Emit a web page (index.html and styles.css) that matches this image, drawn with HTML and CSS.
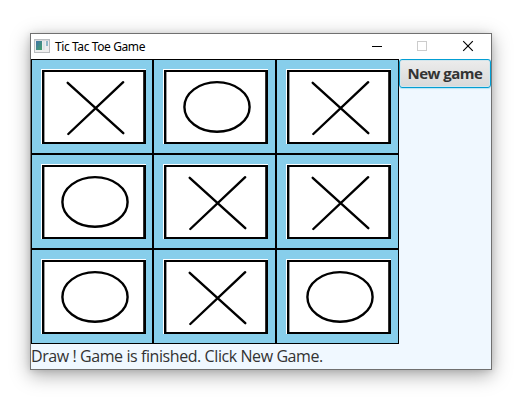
FILE: index.html
```html
<!DOCTYPE html>
<html lang="en">
<head>
<meta charset="utf-8">
<title>Tic Tac Toe Game</title>
<link rel="stylesheet" href="styles.css">
</head>
<body>
<svg class="defs" width="0" height="0" aria-hidden="true">
  <defs>
    <linearGradient id="pane" x1="0" y1="0" x2="1" y2="1">
      <stop offset="0" stop-color="#3f72a8"/><stop offset="1" stop-color="#43a06a"/>
    </linearGradient>
    <symbol id="frame" viewBox="0 0 105 75">
      <rect width="105" height="75" fill="#fff"/>
      <path d="M1 1H105V75H1Z M3.4 3V73H102.2V3Z" fill="#000" fill-rule="evenodd"/>
    </symbol>
    <symbol id="x" viewBox="0 0 105 75">
      <use href="#frame"/>
      <path d="M26.7 13.8L82.3 64.2M82.2 13.2L27.3 65" fill="none" stroke="#000" stroke-width="2.4" stroke-linecap="round"/>
    </symbol>
    <symbol id="o" viewBox="0 0 105 75">
      <use href="#frame"/>
      <ellipse cx="54" cy="37.9" rx="32.6" ry="24.8" fill="none" stroke="#000" stroke-width="2.4"/>
    </symbol>
  </defs>
</svg>
<div class="window">
  <header class="titlebar">
    <svg class="app-icon" width="16" height="14" viewBox="0 0 16 14">
      <rect x=".5" y=".5" width="15" height="13" fill="#eee" stroke="#b9bcbf"/>
      <rect x="1" y="1" width="14" height="1" fill="#d5d7da"/>
      <rect x="2" y="2" width="6" height="9" fill="url(#pane)"/>
      <rect x="9" y="2" width="2" height="9" fill="#dfe5e8"/>
      <rect x="12" y="2" width="2" height="5" fill="#8fb9c9"/>
    </svg>
    <h1 class="title">Tic Tac Toe Game</h1>
    <div class="controls">
      <svg width="46" height="25" viewBox="0 0 46 25"><path d="M19 12.5H29" stroke="#000"/></svg>
      <svg width="46" height="25" viewBox="0 0 46 25"><rect x="18.5" y="7.5" width="9" height="9" fill="none" stroke="#ccc"/></svg>
      <svg width="46" height="25" viewBox="0 0 46 25"><path d="M18.2 7.2L27.8 16.8M27.8 7.2L18.2 16.8" stroke="#000" stroke-width="1.15"/></svg>
    </div>
  </header>
  <main class="content">
    <div class="board">
      <div class="cell"><svg class="mark"><use href="#x"/></svg></div>
      <div class="cell"><svg class="mark"><use href="#o"/></svg></div>
      <div class="cell"><svg class="mark"><use href="#x"/></svg></div>
      <div class="cell"><svg class="mark"><use href="#o"/></svg></div>
      <div class="cell"><svg class="mark"><use href="#x"/></svg></div>
      <div class="cell"><svg class="mark"><use href="#x"/></svg></div>
      <div class="cell"><svg class="mark"><use href="#o"/></svg></div>
      <div class="cell"><svg class="mark"><use href="#x"/></svg></div>
      <div class="cell"><svg class="mark"><use href="#o"/></svg></div>
    </div>
    <button class="new-game" type="button">New game</button>
  </main>
  <footer class="status">Draw ! Game is finished. Click New Game.</footer>
</div>
</body>
</html>
```
FILE: styles.css
```css
* { box-sizing: border-box; }

body {
  margin: 0;
  padding: 33px 0 0 30px;
  height: 408px;
  overflow: hidden;
  background: #fff;
  font-family: "Open Sans", "Noto Sans", sans-serif;
}

.defs { position: absolute; }
svg { display: block; }

.window {
  width: 462px;
  height: 337px;
  border: 1px solid #707070;
  background: #f0f8ff;
  box-shadow: 0 5px 18px rgba(0, 0, 0, .34), 0 1px 6px rgba(0, 0, 0, .12);
}

.titlebar {
  display: flex;
  height: 25px;
  background: #fff;
}

.app-icon { margin: 5px 0 0 3px; }

.title {
  margin: 0 0 0 5px;
  font: 12px/25px "Noto Sans", sans-serif;
  letter-spacing: -.4px;
  white-space: nowrap;
  color: #000;
}

.controls {
  display: flex;
  margin-left: auto;
}

.content {
  display: flex;
  align-items: flex-start;
}

.board {
  display: grid;
  grid-template-columns: 122px 123px 123px;
  grid-auto-rows: 95px;
}

.cell {
  padding: 9px;
  border: 1px solid #000;
  background: #87ceeb;
}

.mark {
  width: 105px;
  height: 75px;
}

.new-game {
  width: 92px;
  height: 29px;
  padding: 0;
  border: 1px solid #039ed3;
  border-radius: 3px;
  background: linear-gradient(#ececec, #d9d9d9);
  box-shadow: inset 0 0 0 1px #d3e6ed, 0 1px 1px #b9e3f3;
  font: bold 15px/25px "Open Sans", sans-serif;
  letter-spacing: -.5px;
  white-space: nowrap;
  color: #333;
}

.status {
  height: 25px;
  font-size: 16px;
  line-height: 25px;
  letter-spacing: -.42px;
  white-space: nowrap;
  color: #333;
}
```
